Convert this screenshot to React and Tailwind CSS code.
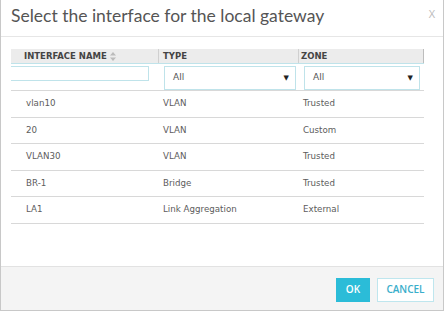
import React from 'react';

const rows = [
    { name: 'vlan10', type: 'VLAN', zone: 'Trusted' },
    { name: '20', type: 'VLAN', zone: 'Custom' },
    { name: 'VLAN30', type: 'VLAN', zone: 'Trusted' },
    { name: 'BR-1', type: 'Bridge', zone: 'Trusted' },
    { name: 'LA1', type: 'Link Aggregation', zone: 'External' },
];

const SortIcon = () => (
    <svg width="6" height="9" viewBox="0 0 6 9" className="ml-[3px]">
        <path d="M3 0 L6 3.5 H0 Z" fill="#bbb" />
        <path d="M3 9 L6 5.5 H0 Z" fill="#bbb" />
    </svg>
);

const FilterSelect = () => (
    <div className="h-[24px] border border-[#bfe3ea] bg-white flex items-center justify-between pl-[8px] pr-[6px] text-[9px] text-[#555]">
        <span>All</span>
        <span className="text-[7px] text-[#222]">▼</span>
    </div>
);

export default function App() {
    return (
        <div className="w-[444px] h-[311px] bg-white flex flex-col border-l border-r border-b border-[#c8c8c8] overflow-hidden" style={{ fontFamily: '"DejaVu Sans", Verdana, sans-serif' }}>

            {/* Title bar */}
            <div className="h-[37px] shrink-0 border-b border-[#e6e6e6] flex items-center justify-between pl-[10px] pr-[8px] pb-[3px]">
                <span className="text-[17.5px] text-[#555]" style={{ fontFamily: 'Lato, "Open Sans", sans-serif' }}>
                    Select the interface for the local gateway
                </span>
                <span className="text-[11px] text-[#bbb] mb-[4px]" style={{ fontFamily: '"Open Sans", sans-serif' }}>X</span>
            </div>

            {/* Body */}
            <div className="flex-1 pt-[12px] pl-[10px] pr-[20px]">
                <div className="w-[413px]">
                    {/* Header */}
                    <div className="grid grid-cols-[148px_140px_125px] h-[15px] bg-[#ececec] border-b border-[#bfe3ea] text-[8.5px] font-bold text-[#444]">
                        <div className="flex items-center pl-[13px] border-r border-[#d0d0d0]">
                            INTERFACE NAME<SortIcon />
                        </div>
                        <div className="flex items-center pl-[4px] border-r border-[#d0d0d0]">TYPE</div>
                        <div className="flex items-center pl-[2px] border-r border-[#bdbdbd]">ZONE</div>
                    </div>

                    {/* Filters */}
                    <div className="grid grid-cols-[148px_140px_125px] h-[27px] border-b border-[#d8d8d8] items-start pt-[2px]">
                        <div className="pr-[10px]">
                            <div className="h-[15px] border border-[#bfe3ea] border-l-0 bg-white" />
                        </div>
                        <div className="pl-[5px] pr-[3px]">
                            <FilterSelect />
                        </div>
                        <div className="pl-[5px] pr-[4px]">
                            <FilterSelect />
                        </div>
                    </div>

                    {/* Rows */}
                    {rows.map((r) => (
                        <div key={r.name} className="grid grid-cols-[148px_140px_125px] h-[26.5px] border-b border-[#d8d8d8] items-center text-[8.7px] text-[#5c5c5c]">
                            <div className="pl-[15px]">{r.name}</div>
                            <div className="pl-[4px]">{r.type}</div>
                            <div className="pl-[4px]">{r.zone}</div>
                        </div>
                    ))}
                </div>
            </div>

            {/* Footer */}
            <div className="h-[44px] shrink-0 bg-[#f4f4f4] border-t border-[#e2e2e2] flex items-center justify-end gap-[7px] pr-[9px] pt-[2px]" style={{ fontFamily: '"Open Sans", sans-serif' }}>
                <button className="h-[24px] w-[34px] bg-[#2bbcd8] text-white text-[10px] font-semibold">OK</button>
                <button className="h-[24px] w-[57px] bg-white border border-[#bfe6ee] text-[#3aaecb] text-[10px] font-semibold">CANCEL</button>
            </div>
        </div>
    );
}
